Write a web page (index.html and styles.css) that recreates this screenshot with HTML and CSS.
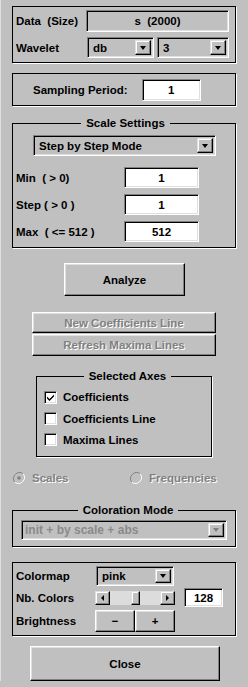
FILE: index.html
```html
<!DOCTYPE html>
<html>
<head>
<meta charset="utf-8">
<link rel="stylesheet" href="styles.css">
</head>
<body>
<div class="win">
  <div class="panel p-data">
    <div class="row r-data">
      <span class="lbl">Data&nbsp; (Size)</span>
      <div class="field ro data-field">s&nbsp; (2000)</div>
    </div>
    <div class="row r-wave">
      <span class="lbl">Wavelet</span>
      <div class="combo c-db"><span class="val">db</span><span class="dd"><i class="arr"></i></span></div>
      <div class="combo c-3"><span class="val">3</span><span class="dd"><i class="arr"></i></span></div>
    </div>
  </div>

  <div class="panel p-samp">
    <span class="lbl">Sampling Period:</span>
    <div class="field edit e-samp">1</div>
  </div>

  <div class="frame f-scale">
    <div class="ftitle">Scale Settings</div>
    <div class="combo c-mode"><span class="val">Step by Step Mode</span><span class="dd"><i class="arr"></i></span></div>
    <div class="srow first"><span class="lbl">Min&nbsp; ( &gt; 0)</span><div class="field edit e-scale">1</div></div>
    <div class="srow"><span class="lbl">Step ( &gt; 0 )</span><div class="field edit e-scale">1</div></div>
    <div class="srow"><span class="lbl">Max&nbsp; ( &lt;= 512 )</span><div class="field edit e-scale">512</div></div>
  </div>

  <div class="btn b-analyze">Analyze</div>

  <div class="btn b-line dis">New Coefficients Line</div>
  <div class="btn b-line b-refresh dis">Refresh Maxima Lines</div>

  <div class="frame f-axes">
    <div class="ftitle">Selected Axes</div>
    <div class="crow first"><span class="cb"><svg width="9" height="9" viewBox="0 0 9 9"><path d="M1 3.5 L3.5 6 L8 1.5 L8 3.5 L3.5 8 L1 5.5 Z" fill="#000"/></svg></span><span class="lbl">Coefficients</span></div>
    <div class="crow"><span class="cb"></span><span class="lbl">Coefficients Line</span></div>
    <div class="crow"><span class="cb"></span><span class="lbl">Maxima Lines</span></div>
  </div>

  <div class="radios">
    <div class="radio r-scales"><svg width="12" height="12" viewBox="0 0 12 12"><path d="M10.2 1.8 A6 6 0 0 0 1.8 10.2" fill="none" stroke="#808080"/><path d="M1.8 10.2 A6 6 0 0 0 10.2 1.8" fill="none" stroke="#fff"/><circle cx="6" cy="6" r="4.5" fill="#c0c0c0"/><circle cx="6" cy="6" r="1.8" fill="#808080"/></svg><span class="lbl dtext">Scales</span></div>
    <div class="radio r-freq"><svg width="12" height="12" viewBox="0 0 12 12"><path d="M10.2 1.8 A6 6 0 0 0 1.8 10.2" fill="none" stroke="#808080"/><path d="M1.8 10.2 A6 6 0 0 0 10.2 1.8" fill="none" stroke="#fff"/><circle cx="6" cy="6" r="4.5" fill="#c0c0c0"/></svg><span class="lbl dtext">Frequencies</span></div>
  </div>

  <div class="frame f-color">
    <div class="ftitle">Coloration Mode</div>
    <div class="combo c-cmode dis"><span class="val dtext2">init + by scale + abs</span><span class="dd"><i class="arr"></i></span></div>
  </div>

  <div class="panel p-cmap">
    <div class="mrow m1">
      <span class="lbl mlbl">Colormap</span>
      <div class="combo c-pink"><span class="val">pink</span><span class="dd"><i class="arr"></i></span></div>
    </div>
    <div class="mrow m2">
      <span class="lbl mlbl">Nb. Colors</span>
      <div class="sbar">
        <span class="sbtn"><i class="al"></i></span>
        <span class="track"></span>
        <span class="thumb"></span>
        <span class="track t2"></span>
        <span class="sbtn"><i class="ar"></i></span>
      </div>
      <div class="field edit e-nb">128</div>
    </div>
    <div class="mrow m3">
      <span class="lbl mlbl">Brightness</span>
      <div class="btn b-br">&minus;</div>
      <div class="btn b-br">+</div>
    </div>
  </div>

  <div class="btn b-close">Close</div>
</div>
</body>
</html>
```
FILE: styles.css
```css
html, body {
  margin: 0;
  padding: 0;
  background: #c0c0c0;
}
body {
  width: 248px;
  height: 687px;
  overflow: hidden;
  font-family: "Liberation Sans", Arial, sans-serif;
  font-weight: bold;
  font-size: 11.5px;
  color: #000;
}
.win {
  padding: 6px 12px 0 11px;
  height: 681px;
  border-left: 1px solid #dfdfdf;
  box-sizing: border-box;
}
.lbl { white-space: nowrap; }

/* plain black panels */
.panel,
.frame {
  border: 1px solid #000;
  box-shadow: 1px 1px 0 #fff;
}
.ftitle {
  width: fit-content;
  margin: -8px auto 0;
  padding: 0 5px;
  height: 14px;
  line-height: 14px;
  background: #c0c0c0;
}

/* sunken field */
.field {
  box-sizing: border-box;
  border: 1px solid;
  border-color: #808080 #fff #fff #808080;
  box-shadow: inset 1px 1px #000, inset -1px -1px #dfdfdf;
  display: flex;
  align-items: center;
  justify-content: center;
}
.edit { background: #fff; }
.ro { background: #c0c0c0; }

/* combo */
.combo {
  box-sizing: border-box;
  border: 1px solid;
  border-color: #808080 #fff #fff #808080;
  box-shadow: inset 1px 1px #000, inset -1px -1px #dfdfdf;
  background: #c0c0c0;
  display: flex;
  align-items: stretch;
  padding: 2px;
}
.combo .val {
  flex: 1;
  display: flex;
  align-items: center;
  padding-left: 3px;
  white-space: nowrap;
}
.combo .dd {
  width: 16px;
  box-sizing: border-box;
  border: 1px solid;
  border-color: #dfdfdf #000 #000 #dfdfdf;
  box-shadow: inset -1px -1px #808080, inset 1px 1px #fff;
  display: flex;
  align-items: center;
  justify-content: center;
}
.arr {
  width: 0;
  height: 0;
  border-left: 3.5px solid transparent;
  border-right: 3.5px solid transparent;
  border-top: 4px solid #000;
}
.combo.dis .arr { border-top-color: #808080; }

/* raised button */
.btn {
  box-sizing: border-box;
  border: 1px solid;
  border-color: #fff #000 #000 #fff;
  box-shadow: inset -1px -1px #808080, inset 1px 1px #dfdfdf;
  display: flex;
  align-items: center;
  justify-content: center;
  background: #c0c0c0;
}
.dis, .dtext {
  color: #808080;
  text-shadow: 1px 1px 0 #fff;
}
.dtext2 {
  color: #8a8a8a;
  text-shadow: none;
  font-size: 12px;
  padding-left: 1px !important;
}

/* panel 1 */
.p-data {
  height: 57px;
  box-sizing: border-box;
  padding: 3px 6px 0 3px;
}
.row { display: flex; align-items: center; }
.r-data { height: 22px; }
.data-field { margin-left: auto; width: 143px; height: 22px; }
.r-wave { height: 21px; margin-top: 5px; }
.c-db { margin-left: auto; width: 67px; height: 21px; }
.c-3 { margin-left: 3px; width: 72px; height: 21px; }

/* sampling */
.p-samp {
  margin-top: 10px;
  height: 33px;
  box-sizing: border-box;
  display: flex;
  align-items: center;
  padding-left: 20px;
}
.e-samp { width: 59px; height: 22px; margin-left: 14px; }

/* scale settings */
.f-scale {
  margin-top: 17px;
  height: 125px;
  box-sizing: border-box;
  padding: 0 0 0 3px;
}
.c-mode { width: 183px; height: 21px; margin: 5px 0 0 17px; }
.srow { display: flex; align-items: center; height: 21px; margin-top: 6px; }
.srow.first { margin-top: 11px; }
.e-scale { width: 75px; height: 21px; margin-left: auto; margin-right: 36px; }

/* analyze */
.b-analyze { width: 121px; height: 33px; margin: 15px 0 0 52px; }
.b-line { width: 184px; height: 21px; margin: 16px 0 0 20px; }
.b-refresh { height: 22px; margin-top: 1px; }

/* selected axes */
.f-axes {
  width: 176px;
  height: 81px;
  box-sizing: border-box;
  margin: 20px 0 0 24px;
  padding-left: 7px;
}
.crow { display: flex; align-items: center; height: 21px; }
.crow.first { margin-top: 3px; height: 22px; }
.cb {
  width: 13px;
  height: 13px;
  box-sizing: border-box;
  border: 1px solid;
  border-color: #808080 #fff #fff #808080;
  box-shadow: inset 1px 1px #000, inset -1px -1px #dfdfdf;
  background: #fff;
  margin-right: 6px;
  display: flex;
  align-items: center;
  justify-content: center;
}

/* radios */
.radios { display: flex; height: 16px; margin-top: 13px; align-items: center; }
.radio { display: flex; align-items: center; gap: 7px; }
.r-scales { margin-left: 1px; width: 117px; }

/* coloration */
.f-color {
  margin-top: 24px;
  height: 37px;
  box-sizing: border-box;
  padding-left: 8px;
}
.c-cmode { width: 206px; height: 20px; margin-top: 3px; }

/* colormap */
.p-cmap {
  margin-top: 15px;
  height: 74px;
  box-sizing: border-box;
  padding: 3px 0 0 3px;
}
.mrow { display: flex; align-items: center; }
.mlbl { width: 80px; }
.m1 { height: 20px; }
.c-pink { width: 78px; height: 20px; }
.m2 { height: 19px; margin-top: 2px; }
.sbar { display: flex; width: 80px; height: 14px; margin-left: -1px; }
.sbtn {
  width: 15px;
  height: 14px;
  box-sizing: border-box;
  border: 1px solid;
  border-color: #dfdfdf #000 #000 #dfdfdf;
  box-shadow: inset -1px -1px #808080, inset 1px 1px #fff;
  background: #c0c0c0;
  display: flex;
  align-items: center;
  justify-content: center;
}
.al, .ar { width: 0; height: 0; border-top: 3px solid transparent; border-bottom: 3px solid transparent; }
.al { border-right: 3px solid #000; }
.ar { border-left: 3px solid #000; }
.track { flex: 1; background: #dcdcdc; }
.thumb {
  width: 9px;
  box-sizing: border-box;
  border: 1px solid;
  border-color: #dfdfdf #000 #000 #dfdfdf;
  box-shadow: inset -1px -1px #808080, inset 1px 1px #fff;
  background: #c0c0c0;
}
.e-nb { width: 39px; height: 19px; margin-left: 9px; }
.m3 { height: 22px; margin-top: 3px; }
.b-br { width: 40px; height: 22px; margin-left: -1px; }
.b-br + .b-br { margin-left: 0; }

/* close */
.b-close { width: 190px; height: 35px; margin: 10px 0 0 18px; }
```
